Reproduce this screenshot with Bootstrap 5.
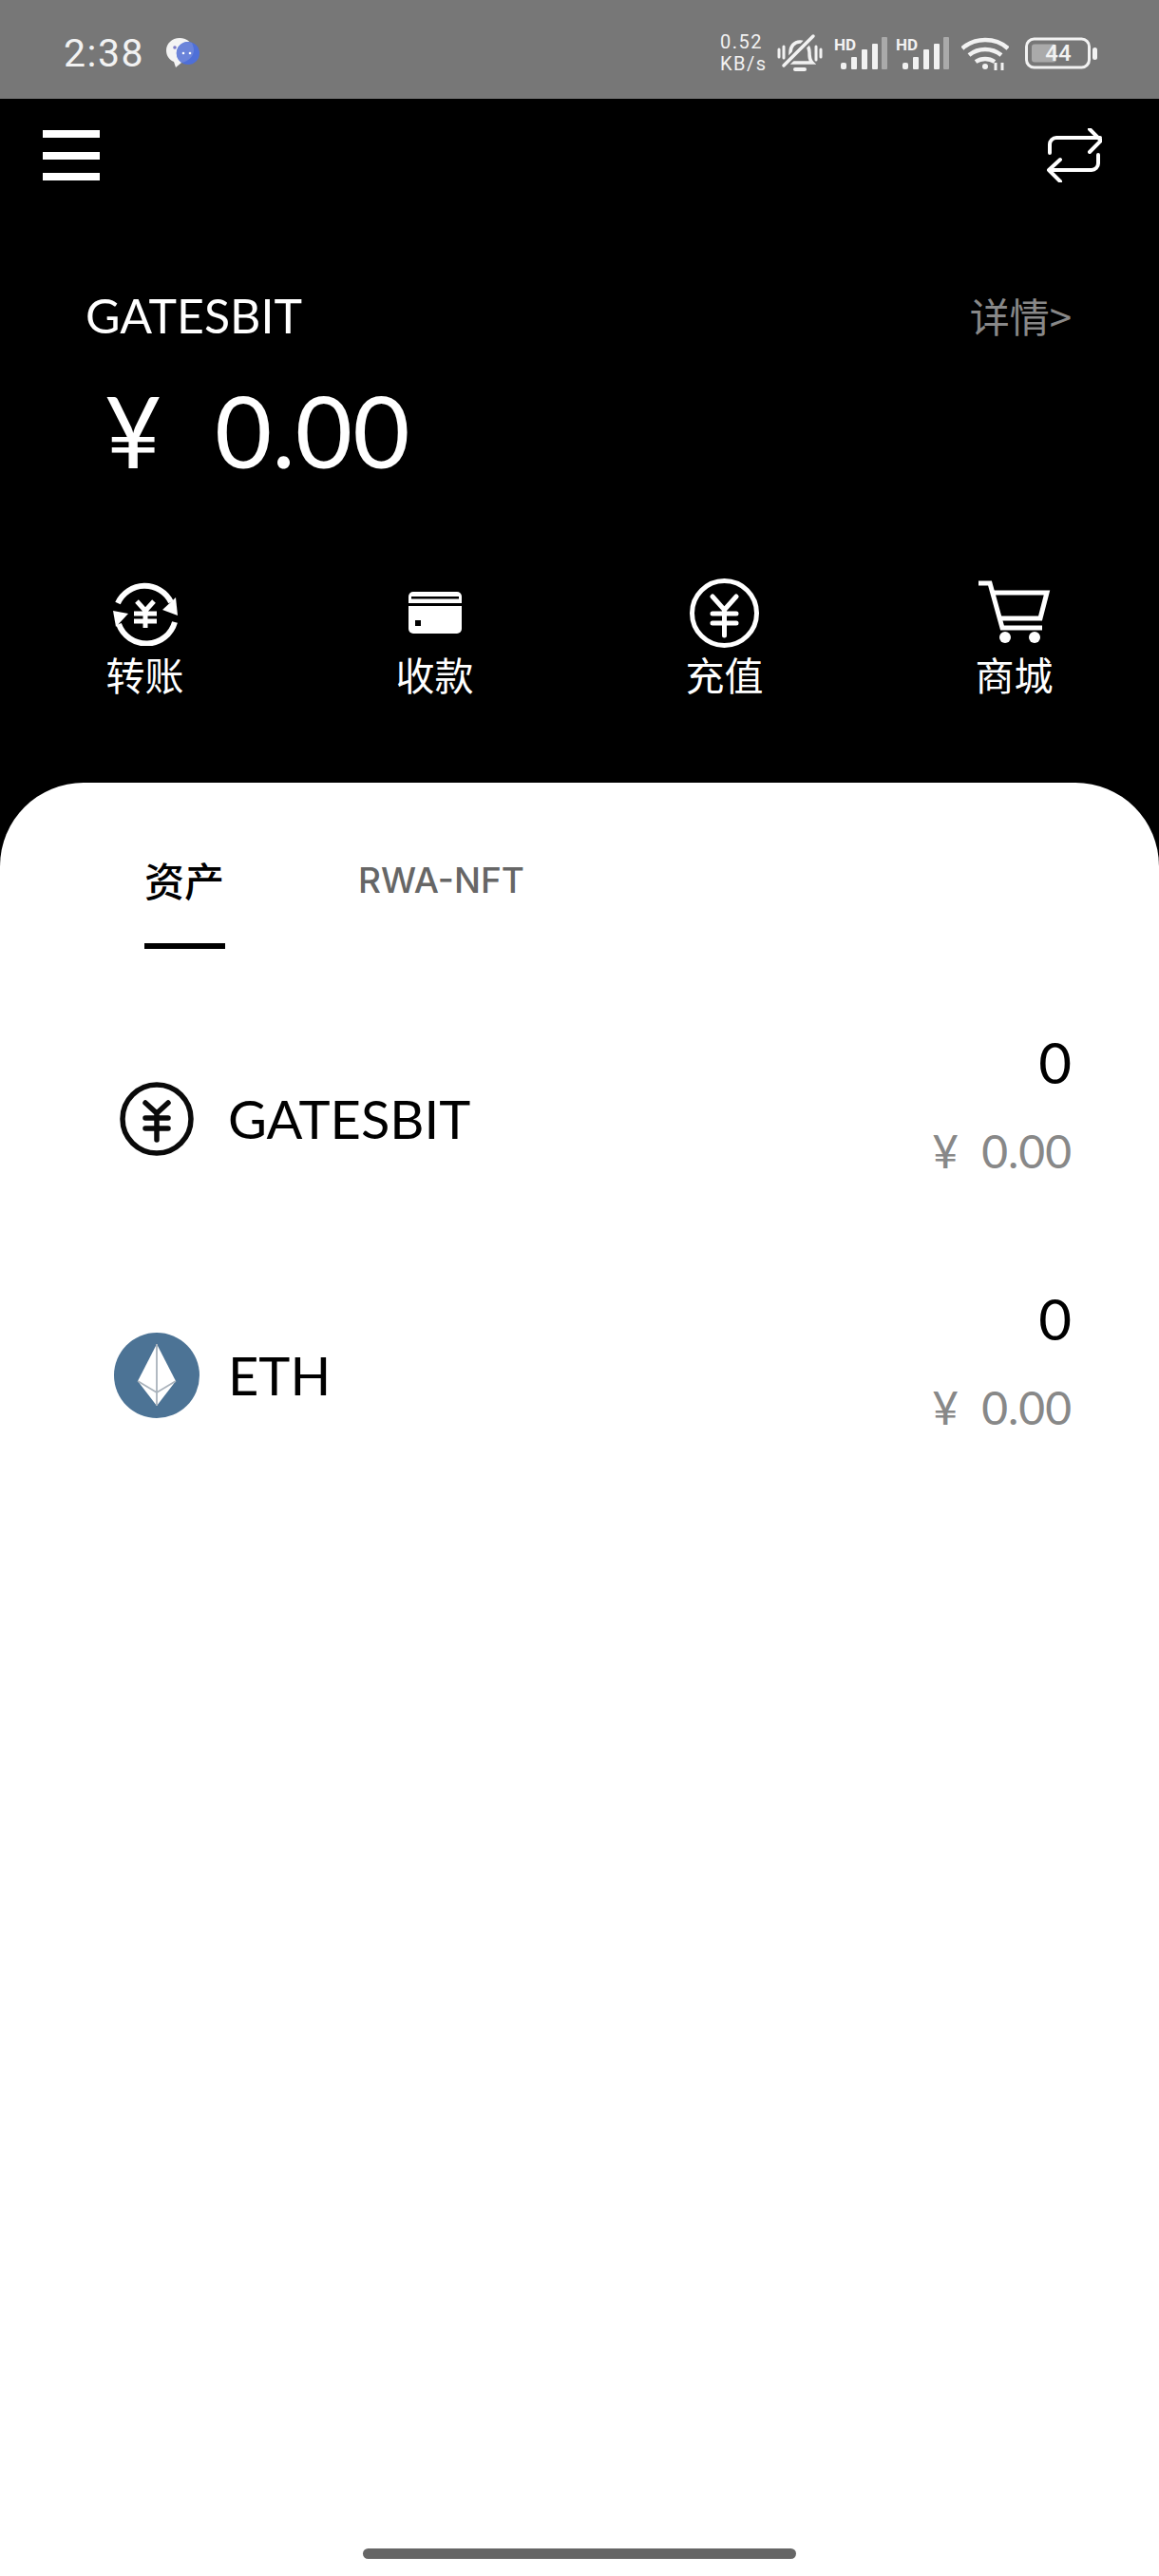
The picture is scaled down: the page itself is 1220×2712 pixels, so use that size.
<!DOCTYPE html>
<html lang="zh">
<head>
<meta charset="utf-8">
<title>GATESBIT</title>
<link href="https://cdn.jsdelivr.net/npm/bootstrap@5.3.0/dist/css/bootstrap.min.css" rel="stylesheet">
<style>
html,body{margin:0;background:#000;}
.app-shell{width:1220px;min-height:2712px;font-family:Lato,"Noto Sans CJK SC",sans-serif;color:#000;}
.status-strip{height:104px;background:#777;color:#f2f2f2;padding:8px 65px 0 67px;font-family:Roboto,sans-serif;}
.clock{font-size:41px;letter-spacing:1.5px;line-height:1;margin-right:22px;}
.speed{font-size:20px;line-height:23.500px;width:50px;margin-right:10px;letter-spacing:1.500px;white-space:nowrap;}
.speed span{display:block;}
.bell-ico{margin-right:12px;}
.sig-ico{margin-right:9px;}
.sig-ico.last{margin-right:13px;}
.wifi-ico{margin-right:17px;}
.top-bar{height:198px;padding:33px 60px 0 45px;}
.burger{width:60px;height:53px;}
.burger i{display:block;height:8px;background:#fff;}
.swap-ico{margin-top:-2px;}
.bal-head{height:60px;padding:0 92px 0 90px;color:#fff;font-size:50px;line-height:60px;}
.detail-link{font-size:42px;color:#888;font-family:"Noto Sans CJK SC",sans-serif;}
.bal-amount{margin:32px 0 0 110px;height:120px;line-height:118px;color:#fff;font-size:104px;}
.yen-big{display:inline-block;width:116px;}
.quick-row{margin:92px 0 0;padding-bottom:90px;}
.quick-cell{padding:0;text-align:center;color:#fff;}
.quick-icon{height:78px;display:flex;align-items:center;justify-content:center;}
.quick-label{font-size:41px;line-height:50px;font-family:"Noto Sans CJK SC",sans-serif;font-weight:400;}
.sheet{background:#fff;border-radius:88px 88px 0 0;min-height:1888px;}
.tab-strip{padding:79px 0 0 152px;gap:140px;}
.tab-item{padding:0 0 40px;height:96px;line-height:48px;color:#666;font-size:37px;font-family:Inter,sans-serif;font-weight:500;}
.tab-item.on{width:85px;color:#000;font-size:42px;line-height:46px;font-weight:500;border-bottom:6px solid #000;font-family:"Noto Sans CJK SC",sans-serif;}
.coin-list{margin-top:44px;}
.coin-row{height:270px;padding:0 92px 0 120px;}
.coin-icon{width:90px;height:90px;margin-right:30px;}
.coin-name{font-size:56px;line-height:60px;}
.coin-vals{text-align:right;margin-bottom:26px;}
.coin-qty{font-size:60px;line-height:70px;margin-bottom:24px;}
.coin-fiat{font-size:48px;line-height:70px;color:#888;}
.yen-small{display:inline-block;width:52px;text-align:left;}
.home-pill{width:456px;height:11px;background:#666;border-radius:6px;margin:0 auto;}
.home-wrap{padding-bottom:18px;}
</style>
</head>
<body>
<div class="app-shell d-flex flex-column">
  <div class="status-strip d-flex align-items-center">
    <span class="clock">2:38</span>
    <svg width="36" height="36" viewBox="0 0 36 36" class="me-auto">
      <path d="M15 2C7 2 1 8 1 15c0 6 3.500 10 8 12l2 6 6-5c8-1 13-6 13-13C30 8 23 2 15 2Z" fill="#f4f4f4"/>
      <circle cx="24" cy="18" r="12" fill="#4e6fd8"/>
      <path d="M24 6a12 12 0 0 0-7 22c6-1 13-6 13-13 0-3-1-5-2-8Z" fill="#6b84da"/>
      <circle cx="10" cy="12" r="1.800" fill="#7c7cc8"/>
      <circle cx="19" cy="18" r="1.300" fill="#fff"/>
      <circle cx="26" cy="18" r="1.300" fill="#fff"/>
    </svg>
    <div class="speed"><span>0.52</span><span>KB/s</span></div>
    <svg width="48" height="42" viewBox="0 0 48 42" fill="none" stroke="#f2f2f2" stroke-linecap="round" class="bell-ico">
      <path d="M11 31c3-3 3-6 3-11 0-6 4-11 10-11s10 5 10 11c0 5 0 8 3 11H11Z" stroke-width="3.500"/>
      <path d="M19 38h10" stroke-width="4"/>
      <path d="M7 34 38 3" stroke="#777" stroke-width="8"/>
      <path d="M7 34 38 3" stroke-width="3.500"/>
      <path d="M2 17v8M7 14v12M41 14v14M46 17v8" stroke-width="3"/>
    </svg>
    <svg width="56" height="36" viewBox="0 0 56 36" class="sig-ico">
      <text x="0" y="15" font-family="Roboto,sans-serif" font-size="17" font-weight="700" fill="#f2f2f2">HD</text>
      <g fill="#f2f2f2"><rect x="7" y="28" width="6" height="7" rx="2"/><rect x="18" y="22" width="6" height="13" rx="1"/><rect x="29" y="14" width="6" height="21" rx="1"/><rect x="40" y="8" width="6" height="27" rx="1"/></g>
      <rect x="50" y="1" width="6" height="34" rx="1" fill="#aaa"/>
    </svg>
    <svg width="56" height="36" viewBox="0 0 56 36" class="sig-ico last">
      <text x="0" y="15" font-family="Roboto,sans-serif" font-size="17" font-weight="700" fill="#f2f2f2">HD</text>
      <g fill="#f2f2f2"><rect x="7" y="28" width="6" height="7" rx="2"/><rect x="18" y="22" width="6" height="13" rx="1"/><rect x="29" y="14" width="6" height="21" rx="1"/><rect x="40" y="8" width="6" height="27" rx="1"/></g>
      <rect x="50" y="1" width="6" height="34" rx="1" fill="#aaa"/>
    </svg>
    <svg width="50" height="40" viewBox="0 0 50 40" fill="none" stroke="#f2f2f2" stroke-width="4.500" class="wifi-ico">
      <path d="M1 15C14 3 36 3 49 15"/>
      <path d="M8 22c10-8 24-8 34 0"/>
      <path d="M15 29c6-4 14-4 20 0"/>
      <circle cx="25" cy="34" r="3" fill="#f2f2f2" stroke="none"/>
      <path d="M36 30v8M43 30v8" stroke-width="3"/>
    </svg>
    <svg width="76" height="34" viewBox="0 0 76 34">
      <rect x="1.500" y="2" width="66" height="30" rx="8" fill="none" stroke="#f2f2f2" stroke-width="3"/>
      <rect x="7" y="7.500" width="26" height="19" rx="3" fill="#aaa"/>
      <rect x="71" y="11" width="5" height="13" rx="2.500" fill="#f2f2f2"/>
      <text x="35" y="25" text-anchor="middle" font-family="Roboto,sans-serif" font-size="24" font-weight="500" fill="#f2f2f2">44</text>
    </svg>
  </div>

  <div class="top-bar d-flex justify-content-between align-items-start">
    <div class="burger d-flex flex-column justify-content-between"><i></i><i></i><i></i></div>
    <svg class="swap-ico" width="58" height="57" viewBox="0 0 58 57" fill="none" stroke="#fff" stroke-width="4" stroke-linecap="round" stroke-linejoin="round">
      <path d="M3 26v-9a7 7 0 0 1 7-7h46M45 1l12 12-12 12"/>
      <path d="M54 28v9a7 7 0 0 1-7 7H3M14 33 2 44l12 12"/>
    </svg>
  </div>

  <div class="bal-head d-flex justify-content-between">
    <span>GATESBIT</span>
    <span class="detail-link">详情&gt;</span>
  </div>
  <div class="bal-amount"><span class="yen-big">¥</span>0.00</div>

  <div class="row quick-row">
    <div class="col-3 quick-cell">
      <div class="quick-icon">
        <svg width="70" height="70" viewBox="0 0 70 70" fill="none" stroke="#fff" stroke-width="6">
          <path d="M6 25A31 31 0 0 1 62 24"/>
          <path d="M66 45A31 31 0 0 1 7 47"/>
          <path d="M69 38 53 32l14-13Z" fill="#fff" stroke="none"/>
          <path d="M1 33l16 3-13 14Z" fill="#fff" stroke="none"/>
          <path d="M26 23l9 10 9-10M23 36h24M23 44h24M35 33v18" stroke-width="5"/>
        </svg>
      </div>
      <div class="quick-label">转账</div>
    </div>
    <div class="col-3 quick-cell">
      <div class="quick-icon">
        <svg width="56" height="44" viewBox="0 0 56 44">
          <rect width="56" height="44" rx="5" fill="#fff"/>
          <rect x="3" y="5" width="50" height="2.500" fill="#000"/>
          <rect x="0" y="12" width="56" height="3" fill="#000"/>
          <rect x="7" y="30" width="6" height="6" fill="#000"/>
        </svg>
      </div>
      <div class="quick-label">收款</div>
    </div>
    <div class="col-3 quick-cell">
      <div class="quick-icon">
        <svg width="73" height="73" viewBox="0 0 73 73" fill="none" stroke="#fff" stroke-width="5" stroke-linecap="round">
          <circle cx="36.500" cy="36.500" r="34"/>
          <path d="M24 19l12.500 14L49 19M24 37h25M24 47h25M36.500 33v27"/>
        </svg>
      </div>
      <div class="quick-label">充值</div>
    </div>
    <div class="col-3 quick-cell">
      <div class="quick-icon">
        <svg width="76" height="68" viewBox="0 0 76 68" fill="none" stroke="#fff" stroke-width="5">
          <path d="M0 3h12l13 47h42"/>
          <path d="M16 13h56l-7 27H24"/>
          <circle cx="28" cy="60" r="6" fill="#fff" stroke="none"/>
          <circle cx="59" cy="60" r="6" fill="#fff" stroke="none"/>
        </svg>
      </div>
      <div class="quick-label">商城</div>
    </div>
  </div>

  <div class="sheet flex-grow-1 d-flex flex-column">
    <div class="nav tab-strip">
      <div class="tab-item on">资产</div>
      <div class="tab-item">RWA-NFT</div>
    </div>
    <div class="coin-list flex-grow-1">
      <div class="coin-row d-flex align-items-center">
        <svg class="coin-icon" viewBox="0 0 90 90" fill="none" stroke="#0a0a0a" stroke-width="5.500" stroke-linecap="round">
          <circle cx="45" cy="45" r="36"/>
          <path d="M33 28l12 11 12-11M33 44h24M33 55h24M45 39v28"/>
        </svg>
        <span class="coin-name">GATESBIT</span>
        <div class="coin-vals ms-auto">
          <div class="coin-qty">0</div>
          <div class="coin-fiat"><span class="yen-small">¥</span>0.00</div>
        </div>
      </div>
      <div class="coin-row d-flex align-items-center">
        <svg class="coin-icon" viewBox="0 0 90 90">
          <circle cx="45" cy="45" r="45" fill="#4c7395"/>
          <path d="M45 12 65 51 45 77 25 51Z" fill="#fff"/>
          <path d="M45 12v65M25 51l20 12 20-12" fill="none" stroke="#aab3bc" stroke-width="1.800"/>
        </svg>
        <span class="coin-name">ETH</span>
        <div class="coin-vals ms-auto">
          <div class="coin-qty">0</div>
          <div class="coin-fiat"><span class="yen-small">¥</span>0.00</div>
        </div>
      </div>
    </div>
    <div class="home-wrap"><div class="home-pill"></div></div>
  </div>
</div>
<script src="https://cdn.jsdelivr.net/npm/bootstrap@5.3.0/dist/js/bootstrap.bundle.min.js"></script>
</body>
</html>
